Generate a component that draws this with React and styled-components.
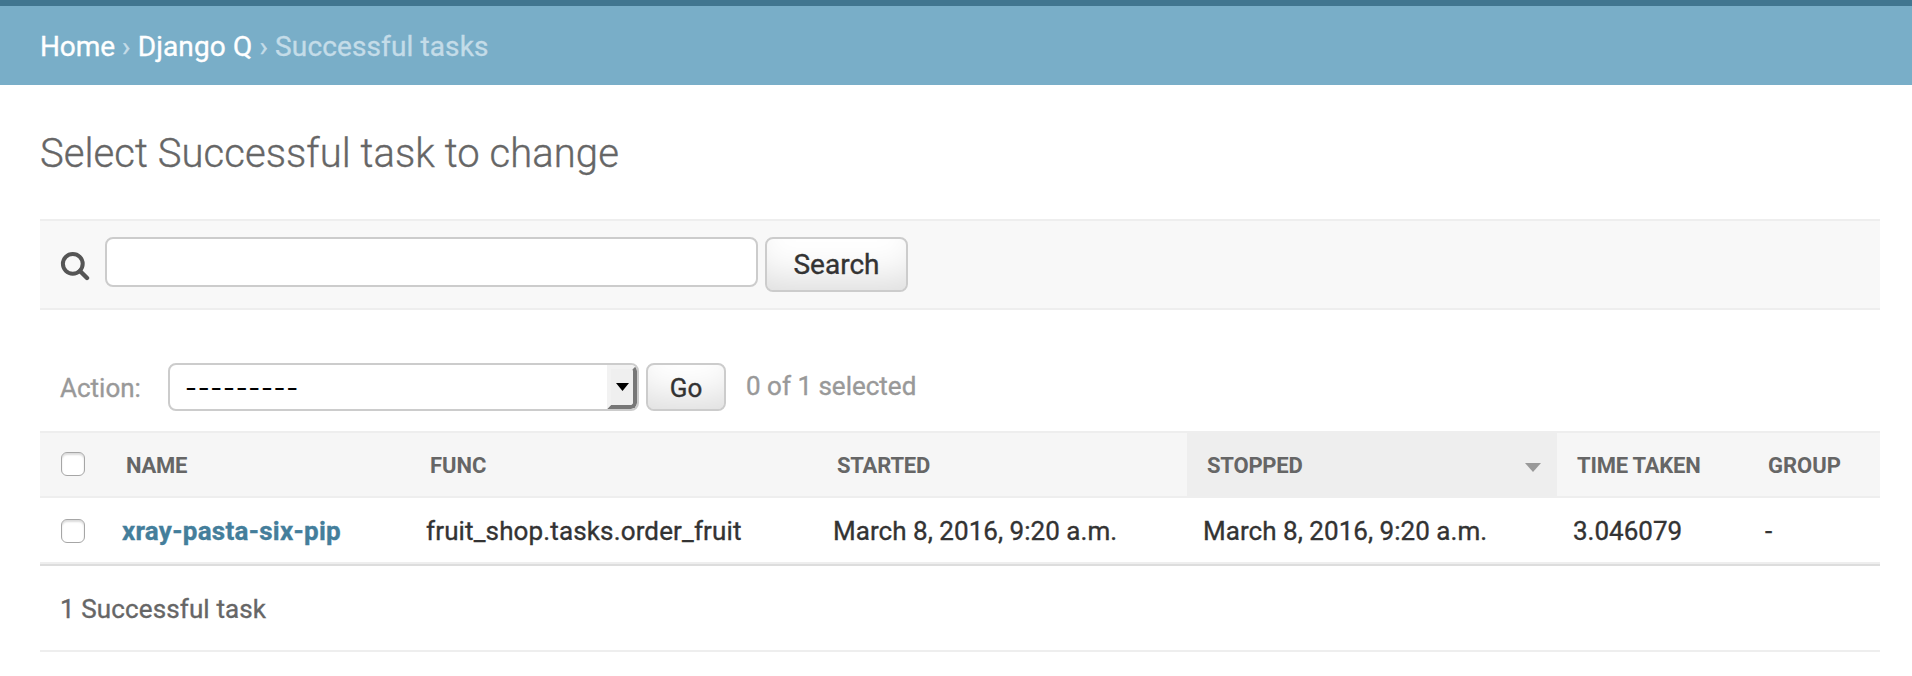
import React from "react";
import styled, { createGlobalStyle } from "styled-components";

const GlobalStyle = createGlobalStyle`
  *, *::before, *::after { box-sizing: border-box; }
  body {
    margin: 0;
    background: #fff;
    color: #333;
    font-family: Roboto, "Liberation Sans", sans-serif;
    font-size: 26px;
    line-height: 30px;
    -webkit-text-stroke: 0.35px currentColor;
  }
`;

const Header = styled.header`
  height: 6px;
  background: #417690;
`;

const Breadcrumbs = styled.nav`
  height: 79px;
  padding: 2px 40px 0;
  display: flex;
  align-items: center;
  background: #79aec8;
  color: #c4dce8;
  font-size: 28px;
  line-height: 32px;
  letter-spacing: 0.12px;
  white-space: pre;
`;

const Crumb = styled.a`
  color: #fff;
  letter-spacing: ${(p) => p.$tracking || 0}px;
`;

const Content = styled.main`
  padding: 0 32px 0 40px;
`;

const Title = styled.h1`
  margin: 0;
  padding-top: 45px;
  height: 134px;
  font-size: 40px;
  line-height: 48px;
  font-weight: 300;
  letter-spacing: 0.06px;
  color: #666;
`;

const SearchBar = styled.form`
  display: flex;
  align-items: flex-start;
  height: 91px;
  padding: 16px 20px;
  border-top: 2px solid #eee;
  border-bottom: 2px solid #eee;
  background: #f8f8f8;
`;

const SearchIcon = styled.svg`
  width: 30px;
  height: 30px;
  margin-top: 14px;
  flex: none;
`;

const SearchInput = styled.input`
  width: 653px;
  height: 50px;
  margin: 0 7px 0 15px;
  border: 2px solid #ccc;
  border-radius: 8px;
  background: #fff;
  outline: none;
`;

const Button = styled.button`
  width: ${(p) => p.$width}px;
  height: ${(p) => p.$height}px;
  padding: ${(p) => p.$top || 0}px 0 0;
  border: 2px solid #ccc;
  border-radius: 8px;
  background: #fff;
  box-shadow: 0 -30px 40px -20px rgba(0, 0, 0, 0.15) inset;
  color: #333;
  font-family: inherit;
  font-size: ${(p) => p.$size}px;
  line-height: 32px;
`;

const Actions = styled.div`
  display: flex;
  align-items: flex-start;
  height: 121px;
  padding: 53px 20px 0;
  color: #999;
`;

const ActionLabel = styled.label`
  width: 108px;
  padding-top: 10px;
`;

const Select = styled.div`
  display: flex;
  justify-content: space-between;
  width: 471px;
  height: 48px;
  margin-right: 7px;
  border: 2px solid #ccc;
  border-radius: 8px;
  overflow: hidden;
  background: #fff;
  color: #000;
`;

const SelectValue = styled.span`
  padding: 8px 0 0 15px;
  font-family: Inter, sans-serif;
  font-size: 26px;
  letter-spacing: 0.7px;
  -webkit-text-stroke-width: 0;
`;

const SelectArrow = styled.span`
  display: flex;
  align-items: center;
  justify-content: center;
  width: 30px;
  height: 44px;
  border-style: solid;
  border-width: 4px;
  border-color: #f2f2f2 #777 #777 #f2f2f2;
  border-radius: 0 6px 6px 0;
  background: #efefef;
`;

const Counter = styled.span`
  padding: 8px 0 0 20px;
`;

const Row = styled.div`
  display: grid;
  grid-template-columns: 66px 304px 407px 370px 370px 191px 132px;
`;

const HeadRow = styled(Row)`
  height: 67px;
  border-top: 2px solid #eee;
  border-bottom: 2px solid #eee;
  background: #f6f6f6;
  color: #666;
  font-size: 22px;
  line-height: 27px;
  font-weight: 700;
  text-transform: uppercase;
  -webkit-text-stroke-width: 0;
`;

const HeadCell = styled.div`
  display: flex;
  justify-content: space-between;
  padding: 19px 16px 0 20px;
  letter-spacing: ${(p) => (p.$tight ? "-0.22px" : "0")};
  background: ${(p) => (p.$sorted ? "#eee" : "transparent")};
`;

const SortArrow = styled.svg`
  width: 16px;
  height: 9px;
  margin-top: 11px;
`;

const BodyRow = styled(Row)`
  height: 66px;
  border-bottom: 2px solid #eee;
`;

const Cell = styled.div`
  padding: 18px 16px 0;
  letter-spacing: ${(p) => p.$tracking || 0}px;

  &:last-child {
    padding-left: 17px;
  }
`;

const TaskLink = styled.a`
  color: #447e9b;
  font-weight: 700;
  letter-spacing: 0.27px;
`;

const Checkbox = styled.span`
  display: block;
  width: 24px;
  height: 24px;
  margin: ${(p) => p.$top}px 0 0 21px;
  border: 1px solid #a6a6a6;
  border-radius: 6px;
  background: #fff;
  box-shadow: inset 0 2px 2px rgba(0, 0, 0, 0.14);
`;

const Paginator = styled.p`
  margin: 0;
  height: 88px;
  padding: 28px 20px 0;
  border-top: 2px solid #ddd;
  border-bottom: 2px solid #eee;
  color: #666;
  letter-spacing: 0.12px;
`;

export default function App() {
  return (
    <>
      <GlobalStyle />
      <Header />
      <Breadcrumbs>
        <Crumb $tracking={-0.1}>Home</Crumb> › <Crumb $tracking={0.14}>Django Q</Crumb> › Successful tasks
      </Breadcrumbs>
      <Content>
        <Title>Select Successful task to change</Title>
        <SearchBar>
          <SearchIcon viewBox="0 0 30 30" fill="none" stroke="#555">
            <circle cx="12.8" cy="12.8" r="9.9" strokeWidth="4" />
            <path d="M20 20l7 7" strokeWidth="4.4" strokeLinecap="round" />
          </SearchIcon>
          <SearchInput type="text" />
          <Button type="button" $width={143} $height={55} $size={28}>Search</Button>
        </SearchBar>
        <Actions>
          <ActionLabel>Action:</ActionLabel>
          <Select>
            <SelectValue>---------</SelectValue>
            <SelectArrow>
              <svg width="13" height="8" viewBox="0 0 14 8" preserveAspectRatio="none"><path d="M0 0h14L7 8z" fill="#000" /></svg>
            </SelectArrow>
          </Select>
          <Button type="button" $width={80} $height={48} $size={26} $top={2}>Go</Button>
          <Counter>0 of 1 selected</Counter>
        </Actions>
        <HeadRow>
          <Checkbox $top={19} />
          <HeadCell $tight>Name</HeadCell>
          <HeadCell>Func</HeadCell>
          <HeadCell $tight>Started</HeadCell>
          <HeadCell $tight $sorted>
            Stopped
            <SortArrow viewBox="0 0 16 9"><path d="M0 0h16L8 9z" fill="#999" /></SortArrow>
          </HeadCell>
          <HeadCell $tight>Time taken</HeadCell>
          <HeadCell>Group</HeadCell>
        </HeadRow>
        <BodyRow>
          <Checkbox $top={21} />
          <Cell><TaskLink>xray-pasta-six-pip</TaskLink></Cell>
          <Cell $tracking={0.14}>fruit_shop.tasks.order_fruit</Cell>
          <Cell $tracking={0.04}>March 8, 2016, 9:20 a.m.</Cell>
          <Cell $tracking={0.04}>March 8, 2016, 9:20 a.m.</Cell>
          <Cell>3.046079</Cell>
          <Cell>-</Cell>
        </BodyRow>
        <Paginator>1 Successful task</Paginator>
      </Content>
    </>
  );
}
